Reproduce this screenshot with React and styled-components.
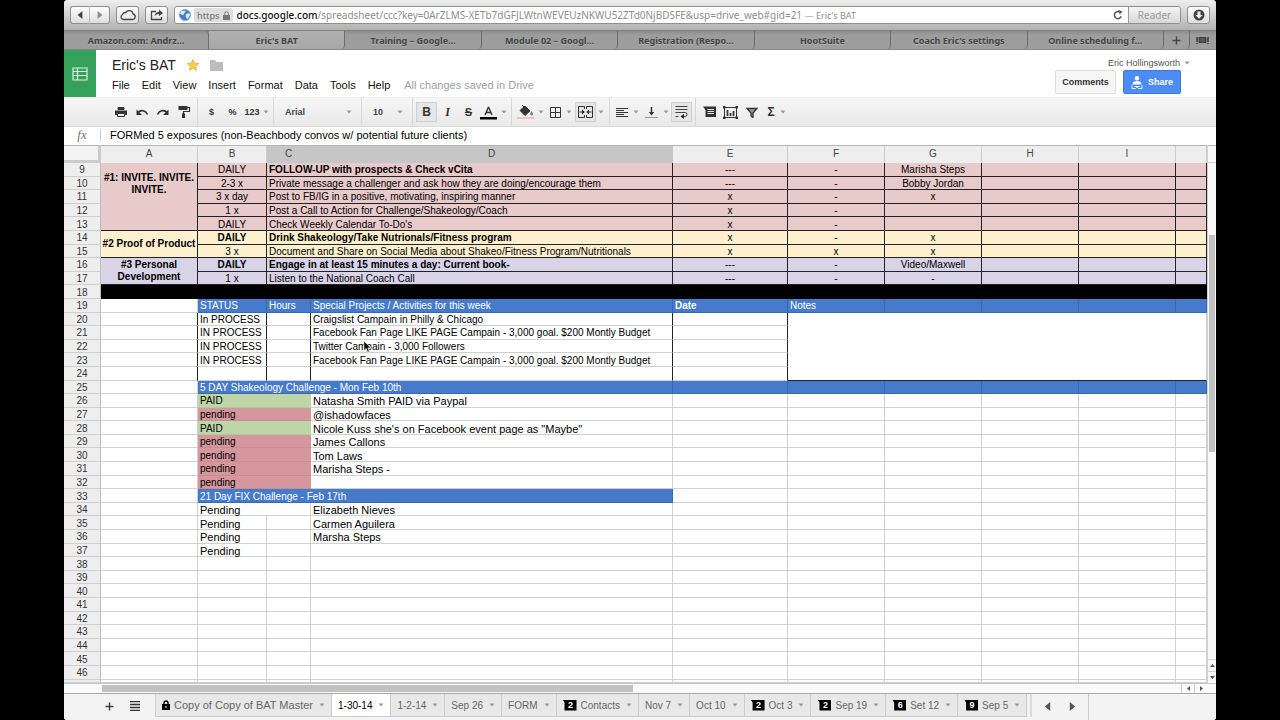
import React from "react";
import styled, { createGlobalStyle, css } from "styled-components";

const GlobalStyle = createGlobalStyle`
  *, *::before, *::after { box-sizing: border-box; }
  html, body { margin: 0; background: #000; }
  body { font-family: "Liberation Sans", Arial, sans-serif; font-size: 11px; color: #222; }
  button, input, select { font: inherit; color: inherit; margin: 0; padding: 0; border: 0; background: none; border-radius: 0; }
  svg { display: block; flex: none; }
`;

/* ---------- window ---------- */

const Backdrop = styled.div`
  height: 100vh;
  padding: 0 5%;
  background: #000;
`;

const Window = styled.div`
  height: 100%;
  display: flex;
  flex-direction: column;
  overflow: hidden;
  background: #fff;
  border-radius: 4px 4px 3px 3px;
`;

const BrowserBar = styled.header`
  flex: none;
  display: flex;
  align-items: center;
  gap: 6px;
  height: 31px;
  padding: 0 6px;
  background: linear-gradient(#efefef, #dcdcdc 30%, #b2b2b2);
  border-bottom: 1px solid #808080;
`;

const ChromeButton = styled.button`
  display: flex;
  align-items: center;
  justify-content: center;
  width: ${(p) => p.$w || 23}px;
  height: 18px;
  background: linear-gradient(#fdfdfd, #dedede);
  border: 1px solid #8f8f8f;
  border-radius: 3px;
`;

const NavPair = styled.div`
  display: flex;
  button:first-child { border-radius: 3px 0 0 3px; border-right-color: #bbb; }
  button:last-child { border-radius: 0 3px 3px 0; border-left: 0; }
`;

const Address = styled.div`
  flex: 1;
  min-width: 0;
  display: flex;
  align-items: center;
  height: 18px;
  overflow: hidden;
  background: #fff;
  border: 1px solid #8f8f8f;
  border-radius: 3px;
  font-family: "Noto Sans", "Open Sans", sans-serif;
  font-size: 10px;
  white-space: nowrap;
  padding-left: 4px;
`;

const Secure = styled.span`
  display: flex;
  align-items: center;
  gap: 3px;
  height: 14px;
  margin: 0 4px 0 3px;
  padding: 0 3px;
  background: #dedede;
  border-radius: 2px;
  font-size: 9px;
  font-weight: 500;
  color: #7a7a7a;
`;

const Url = styled.span`
  flex: 1;
  color: #8e8e8e;
  b { font-weight: 500; color: #111; }
  small { font-size: 9px; }
`;

const Reader = styled.button`
  height: 16px;
  width: 52px;
  margin-left: 5px;
  background: linear-gradient(#f4f4f4, #d8d8d8);
  border-left: 1px solid #9a9a9a;
  font-size: 10px;
  color: #9c9c9c;
`;

const BrowserTabs = styled.nav`
  flex: none;
  display: flex;
  height: 19px;
  background: linear-gradient(#8b8b8b, #9d9d9d 4px, #9d9d9d);
  border-bottom: 1px solid #868686;
  font-family: "Noto Sans", "Open Sans", sans-serif;
`;

const BrowserTab = styled.button`
  flex: ${(p) => (p.$w ? `0 0 ${p.$w}px` : "1 1 0")};
  min-width: 0;
  display: flex;
  align-items: center;
  justify-content: center;
  font-size: 9px;
  font-weight: 700;
  color: #444;
  text-shadow: 0 1px 0 #b4b4b4;
  white-space: nowrap;
  border-right: 1px solid #6c6c6c;
  border-radius: 0 0 4px 0;
  &:first-child { border-radius: 0 4px 0 0; }
  &:last-child { border-right: 0; }
  ${(p) => p.$active && css`background: linear-gradient(#b0b0b0, #a8a8a8);`}
`;

/* ---------- document header ---------- */

const DocHeader = styled.div`
  flex: none;
  display: flex;
  height: 47px;
`;

const Logo = styled.a`
  display: flex;
  align-items: center;
  justify-content: center;
  width: 32px;
  background: #36a15a;
`;

const DocInfo = styled.div`
  flex: 1;
  display: flex;
  flex-direction: column;
  padding: 5px 0 0 16px;
`;

const TitleRow = styled.div`
  display: flex;
  align-items: center;
  gap: 11px;
  height: 20px;
  h1 { margin: 0; font-size: 14px; font-weight: 400; line-height: 20px; color: #222; }
`;

const MenuBar = styled.div`
  display: flex;
  align-items: center;
  gap: 12px;
  height: 20px;
  button { color: #111; }
  span { margin-left: 2px; color: #a0a0a0; }
`;

const Account = styled.div`
  display: flex;
  flex-direction: column;
  align-items: flex-end;
  padding: 7px 26px 0 0;
`;

const UserName = styled.button`
  display: flex;
  align-items: center;
  gap: 4px;
  height: 12px;
  font-size: 9px;
  line-height: 12px;
  color: #555;
`;

const Actions = styled.div`
  display: flex;
  gap: 7px;
  margin: 1px 9px 0 0;
`;

const ActionButton = styled.button`
  display: flex;
  align-items: center;
  justify-content: center;
  gap: 5px;
  width: ${(p) => (p.$primary ? 58 : 61)}px;
  height: 24px;
  border: 1px solid ${(p) => (p.$primary ? "#4078df" : "#dcdcdc")};
  border-radius: 2px;
  background: ${(p) => (p.$primary ? "#4d8cf2" : "#f6f6f6")};
  color: ${(p) => (p.$primary ? "#fff" : "#333")};
  font-size: 9px;
  font-weight: 700;
`;

/* ---------- toolbar ---------- */

const Toolbar = styled.div`
  flex: none;
  display: flex;
  height: 30px;
  padding-left: 43px;
  background: linear-gradient(#f6f6f6, #e9e9e9);
  border-top: 1px solid #ececec;
  border-bottom: 1px solid #dadada;
`;

const Group = styled.div`
  display: flex;
  align-items: center;
  padding: 0 3px;
  border-right: 1px solid ${(p) => (p.$last ? "transparent" : "#d6d6d6")};
`;

const Tool = styled.button`
  display: flex;
  align-items: center;
  justify-content: center;
  gap: ${(p) => p.$gap || 0}px;
  width: ${(p) => p.$w || 21}px;
  height: 20px;
  font-size: ${(p) => (p.$large ? 12 : 9)}px;
  font-weight: 700;
  color: #333;
  border: 1px solid ${(p) => (p.$on ? "#cfcfcf" : "transparent")};
  background: ${(p) => (p.$on ? "#e6e6e6" : "none")};
  i { font-family: "Liberation Serif", serif; }
  s { font-size: 11px; }
`;

const Picker = styled.label`
  display: flex;
  align-items: center;
  width: ${(p) => p.$w}px;
  padding: 0 6px 0 8px;
  select {
    flex: 1;
    min-width: 0;
    appearance: none;
    font-size: 9px;
    font-weight: 700;
    color: #444;
    outline: 0;
  }
`;

const FormulaBar = styled.label`
  flex: none;
  display: flex;
  align-items: center;
  height: 18px;
  padding-bottom: 2px;
  i { width: 36px; text-align: center; font: italic 13px "Liberation Serif", serif; color: #777; }
  input {
    flex: 1;
    height: 12px;
    padding-left: 9px;
    border-left: 1px solid #ccc;
    color: #000;
    outline: 0;
  }
`;

/* ---------- grid ---------- */

const SheetArea = styled.main`
  flex: 1;
  min-height: 0;
  display: flex;
`;

const GridBox = styled.div`
  flex: 1;
  min-width: 0;
  overflow: hidden;
`;

const Grid = styled.table`
  width: 100%;
  height: 100%;
  table-layout: fixed;
  border-collapse: separate;
  border-spacing: 0;
  color: #000;
`;

const ColHead = styled.th`
  height: 18px;
  padding: 0;
  font-size: 10px;
  font-weight: 400;
  line-height: 16px;
  vertical-align: top;
  color: #444;
  background: ${(p) => (p.$selected ? "#c6c6c6" : "#eeeeee")};
  border-top: 1px solid #b5b5b5;
  border-right: 1px solid ${(p) => (p.$selected ? "#c6c6c6" : "#cccccc")};
`;

const Corner = styled(ColHead)`
  background: #f3f3f3;
  border-right: 3px solid #cbcbcb;
  border-bottom: 3px solid #cbcbcb;
`;

const RowHead = styled.th`
  padding: 2px 0 0;
  font-size: 10px;
  font-weight: 400;
  line-height: 10px;
  color: #333;
  background: #eeeeee;
  border-right: 1px solid #bdbdbd;
  border-bottom: 1px solid #cfcfcf;
`;

const Cell = styled.td`
  position: relative;
  padding: ${(p) => (p.$top ? "9px 0 0" : p.$wrap ? "0" : p.$center ? "2px 0 0" : "2px 0 0 2px")};
  font-size: ${(p) => (p.$large ? 11 : 10)}px;
  font-weight: ${(p) => (p.$bold ? 700 : 400)};
  line-height: ${(p) => (p.$wrap ? 12 : 10)}px;
  text-align: ${(p) => (p.$center ? "center" : "left")};
  vertical-align: ${(p) => (p.$top ? "top" : "middle")};
  white-space: ${(p) => (p.$wrap ? "normal" : "nowrap")};
  background: ${(p) => p.$bg || "#fff"};
  color: ${(p) => p.$fg || "#000"};
  border-right: 1px solid ${(p) => p.$right || "#d0d0d0"};
  border-bottom: 1px solid ${(p) => p.$bottom || "#d0d0d0"};
`;

const Pointer = styled.svg`
  position: absolute;
  left: 52px;
  top: 0;
  z-index: 1;
`;

/* ---------- scroll bars ---------- */

const VScroll = styled.div`
  flex: none;
  width: 9px;
  display: flex;
  flex-direction: column;
  background: #f8f8f8;
  border-left: 1px solid #d0d0d0;
`;

const VScrollHead = styled.div`
  height: 18px;
  border-top: 1px solid #b5b5b5;
  border-bottom: 1px solid #d0d0d0;
`;

const HScroll = styled.div`
  flex: none;
  display: flex;
  height: 10px;
  padding: 0 9px 0 37px;
  background: #fafafa;
  border-top: 1px solid #c4c4c4;
`;

const Span = styled.div`
  flex: ${(p) => p.$share} 1 0;
  margin: ${(p) => (p.$thumb ? "1px" : 0)};
  background: ${(p) => (p.$thumb ? "#c1c1c1" : "none")};
`;

const ScrollButton = styled.button`
  display: flex;
  align-items: center;
  justify-content: center;
  min-width: 8px;
  width: ${(p) => (p.$across ? "13px" : "auto")};
  height: ${(p) => (p.$across ? "auto" : "12px")};
  border-left: ${(p) => (p.$across ? "1px solid #d0d0d0" : "0")};
  border-top: ${(p) => (p.$across ? "0" : "1px solid #d0d0d0")};
`;

/* ---------- sheet tabs ---------- */

const SheetBar = styled.footer`
  flex: none;
  display: flex;
  align-items: flex-start;
  height: 27px;
  padding-left: 33px;
  background: #f3f3f3;
  border-top: 1px solid #a8a8a8;
`;

const BarButton = styled.button`
  display: flex;
  align-items: center;
  justify-content: center;
  width: 25px;
  height: 24px;
`;

const SheetTabs = styled.div`
  display: flex;
  margin-left: 8px;
  padding-right: 3px;
  border-left: 1px solid #cfcfcf;
  border-right: 2px solid #dcdcdc;
`;

const SheetTab = styled.button`
  display: flex;
  align-items: center;
  gap: 4px;
  height: 23px;
  padding: 0 6px;
  white-space: nowrap;
  color: ${(p) => (p.$active ? "#000" : "#666")};
  background: ${(p) => (p.$active ? "#fff" : "#e8e8e8")};
  border-right: 1px solid #cccccc;
  border-bottom: 1px solid #cccccc;
  font-size: ${(p) => (p.$large ? 11 : 10)}px;
  svg:last-child { margin-left: 2px; }
`;

const Badge = styled.span`
  width: 14px;
  height: 11px;
  padding-left: 2px;
  background: #000;
  clip-path: polygon(0 0, 100% 0, 100% 100%, 2px 100%, 2px 3px);
  color: #fff;
  font-size: 9px;
  font-weight: 700;
  line-height: 11px;
  text-align: center;
`;

const TabNav = styled.div`
  display: flex;
  height: 26px;
  padding: 0 3px;
  border-right: 1px solid #cccccc;
`;

/* ---------- icons ---------- */

const Caret = ({ color = "#999" }) => (
  <svg width="6" height="4" viewBox="0 0 6 4" aria-hidden="true"><path d="M0.5 0.5h5L3 3.5z" fill={color} /></svg>
);

const Triangle = ({ dir, size = 6, color = "#555" }) => {
  const d = { left: "M8 0v10L2 5z", right: "M2 0v10l6-5z", up: "M0 8h10L5 2z", down: "M0 2h10L5 8z" }[dir];
  return <svg width={size} height={size} viewBox="0 0 10 10" aria-hidden="true"><path d={d} fill={color} /></svg>;
};

const Icon = ({ children, w = 14, h = 14 }) => (
  <svg width={w} height={h} viewBox={`0 0 ${w} ${h}`} fill="none" stroke="#333" strokeWidth="1" aria-hidden="true">{children}</svg>
);

const icons = {
  cloud: (
    <Icon w={18} h={12}><path d="M4.5 10.5h9a2.8 2.8 0 0 0 .6-5.5A4 4 0 0 0 6.7 3.6 2.4 2.4 0 0 0 3.6 5.5A2.6 2.6 0 0 0 4.5 10.5z" stroke="#444" strokeWidth="1.3" /></Icon>
  ),
  share: (
    <Icon><path d="M6 3.5H1.5v8h10V9" stroke="#444" strokeWidth="1.3" /><path d="M4.5 8.5c.3-3 2-4.6 4.5-4.8V1.5l4 3.4-4 3.3V6c-2 0-3.3.7-4.5 2.5z" fill="#444" stroke="none" /></Icon>
  ),
  globe: (
    <Icon w={12} h={12}><circle cx="6" cy="6" r="5.5" fill="#3f7fc4" stroke="#7fa6cf" /><path d="M2 2.5C4 1 5 2 6.5 1.5 7 3 5 4 4.5 5.5S2.5 5.5 1 4.5zM7 5c1.5-1 3-1 4 0 0 2-1.5 4.5-3 5C7 8.5 6 6.5 7 5z" fill="#d7ecf6" stroke="none" /></Icon>
  ),
  lock: (
    <Icon w={7} h={9}><path d="M1.7 4V2.5a1.8 1.8 0 0 1 3.6 0V4" stroke="#777" /><rect x="0" y="4" width="7" height="5" fill="#777" stroke="none" /></Icon>
  ),
  reload: (
    <Icon w={10} h={10}><path d="M8.2 6.2A3.5 3.5 0 1 1 6.8 2.2" stroke="#555" strokeWidth="1.5" /><path d="M5.5 0l4 1.5-2.8 3z" fill="#555" stroke="none" /></Icon>
  ),
  download: (
    <Icon w={12} h={12}><circle cx="6" cy="6" r="5.5" fill="#444" stroke="none" /><path d="M4.5 2.5h3V6h2L6 9.8 2.5 6h2z" fill="#eee" stroke="none" /></Icon>
  ),
  plus: <Icon w={9} h={9}><path d="M4.5 0.5v8M0.5 4.5h8" stroke="#444" strokeWidth="1.5" /></Icon>,
  allTabs: <Icon w={13} h={7}><path d="M3 0.5h7v5H3z" fill="#555" stroke="#3d3d3d" /><path d="M1 0v5M12 0v5M1 6v1M12 6v1" stroke="#3d3d3d" strokeWidth="1.5" /></Icon>,
  sheet: (
    <Icon w={16} h={14}><path d="M1 1h14v12H1zM1 4.5h14M1 8.5h14M5.5 1V13" stroke="#d7f0df" strokeWidth="1.2" /></Icon>
  ),
  star: <Icon w={12} h={12}><path d="M6 0.5l1.6 3.7 4 .4-3 2.6.9 4L6 9.1l-3.5 2.1.9-4-3-2.6 4-.4z" fill="#f7d04a" stroke="#dba92c" strokeWidth=".8" /></Icon>,
  folder: <Icon w={13} h={11}><path d="M0 0h5l1.5 2H13v9H0z" fill="#bdbdbd" stroke="none" /></Icon>,
  person: (
    <Icon w={12} h={13}><circle cx="6" cy="2.2" r="2.2" fill="#fff" stroke="none" /><path d="M1.5 8.5c0-2.5 2-3.5 4.5-3.5s4.5 1 4.5 3.5z" fill="#fff" stroke="none" /><path d="M1 9.5v3h3.5l1-1h1l1 1H11v-3M3.5 10.5h5" stroke="#fff" strokeWidth=".9" /></Icon>
  ),
  print: (
    <Icon><path d="M4 2.5h6v2H4z" fill="#333" /><path d="M1 5.5h12V10h-2V8H3v2H1z" fill="#333" stroke="none" /><path d="M3.5 8.5h7v3h-7z" fill="#eee" /></Icon>
  ),
  undo: <Icon><path d="M3 7.5C5.5 4.5 10.5 5 12.5 9.5" strokeWidth="1.6" /><path d="M1.5 4.5V10H7z" fill="#333" stroke="none" /></Icon>,
  redo: <Icon><path d="M11 7.5C8.5 4.5 3.5 5 1.5 9.5" strokeWidth="1.6" /><path d="M12.5 4.5V10H7z" fill="#333" stroke="none" /></Icon>,
  paint: <Icon><path d="M1.5 1h9v4h-9z" fill="#333" stroke="none" /><path d="M10 2.5h2.5v4h-6V9" strokeWidth="1.2" /><path d="M5 8.5h3V13H5z" fill="#333" stroke="none" /></Icon>,
  textColor: (
    <Icon w={17} h={16}><path d="M5 11L8.3 3.5h.4L12 11M6 8.5h5" strokeWidth="1.4" /><path d="M0 13h17v2.5H0z" fill="#000" stroke="none" /></Icon>
  ),
  fill: (
    <Icon w={17} h={16}><path d="M3 6.5L8 2l5 5-5 4.5z" fill="#333" /><path d="M5 1l4 4" /><path d="M14.5 7c1 1.5 1.5 2.5 1.5 3a1.4 1.4 0 0 1-2.8 0c0-.6.6-1.5 1.3-3z" fill="#777" stroke="none" /><path d="M0 13h17v2H0z" fill="#efc4c7" stroke="none" /></Icon>
  ),
  borders: <Icon w={11} h={11}><path d="M.5.5h10v10H.5zM5.5.5v10M.5 5.5h10" /></Icon>,
  merge: (
    <Icon w={15} h={12}><path d="M6.5 3V.5H.5v11h6V9M8.5 3V.5h6v11h-6V9" /><path d="M1.5 6h3M13.5 6h-3" /><path d="M4 3.5L6.8 6 4 8.5zM11 3.5L8.2 6 11 8.5z" fill="#222" stroke="none" /></Icon>
  ),
  align: <Icon w={12} h={11}><path d="M0 1.5h12M0 3.5h8M0 5.5h12M0 7.5h8M0 9.5h12" /></Icon>,
  valign: <Icon w={13} h={13}><path d="M6.5 1v6" strokeWidth="1.5" /><path d="M3.8 6h5.4L6.5 9.5z" fill="#333" stroke="none" /><path d="M0 11.5h13" stroke="#999" /></Icon>,
  wrap: <Icon w={13} h={14}><path d="M.5 1.5h12M.5 4.5h12M.5 7.5h9.5a2 2 0 0 1 0 4H8M.5 11.5h3" stroke="#444" /><path d="M9 9l-3.5 2.5L9 14z" fill="#222" stroke="none" /></Icon>,
  comment: <Icon w={13} h={12}><path d="M0 0.5h13v10.5H2.5V4z" fill="#333" stroke="none" /><path d="M4.5 3.5h6.5M4.5 5.5h6.5M4.5 7.5h6.5" stroke="#e8e8e8" /></Icon>,
  chart: (
    <Icon w={15} h={13}><path d="M1.5 1.5h12v10h-12z" /><path d="M0 0h2.5v2.5H0zM12.5 0H15v2.5h-2.5zM0 10.5h2.5V13H0zM12.5 10.5H15V13h-2.5z" fill="#333" stroke="none" /><path d="M4.5 4v6M7.5 7v3M10.5 5v5" strokeWidth="1.7" /></Icon>
  ),
  filter: <Icon w={12} h={11}><path d="M1 1.5h10L7 6v4.5L5 9V6z" fill="#999" strokeWidth="1.3" /></Icon>,
  lines: <Icon w={10} h={10}><path d="M0 .5h10M0 3.5h10M0 6.5h10M0 9.5h10" stroke="#333" strokeWidth="1.3" /></Icon>,
  sheetLock: (
    <Icon w={8} h={10}><path d="M2 4.5V3a2 2 0 0 1 4 0v1.5" stroke="#000" strokeWidth="1.4" /><path d="M0 4h8v6H0z" fill="#000" stroke="none" /><path d="M4 6v2" stroke="#fff" /></Icon>
  ),
};

/* ---------- data ---------- */

const PINK = "#e8cacb";
const CREAM = "#fdf0ce";
const LILAC = "#d8d3e7";
const BLUE = "#467acb";
const GREEN = "#bcd6a8";
const ROSE = "#d5979d";
const INK = "#222";
const BLUE_LINE = "#3a66ac";

const columnWidths = [37, 97, 69, 44, 362, 115, 97, 97, 97, 97];

const goals = [
  { n: 9, bg: PINK, section: "#1: INVITE. INVITE. INVITE.", span: 5, freq: "DAILY", task: "FOLLOW-UP with prospects & Check vCita", bold: true, e: "---", f: "-", g: "Marisha Steps" },
  { n: 10, bg: PINK, freq: "2-3 x", task: "Private message a challenger and ask how they are doing/encourage them", e: "---", f: "-", g: "Bobby Jordan" },
  { n: 11, bg: PINK, freq: "3 x day", task: "Post to FB/IG in a positive, motivating, inspiring manner", e: "x", f: "-", g: "x" },
  { n: 12, bg: PINK, freq: "1 x", task: "Post a Call to Action for Challenge/Shakeology/Coach", e: "x", f: "-" },
  { n: 13, bg: PINK, freq: "DAILY", task: "Check Weekly Calendar To-Do's", e: "x", f: "-" },
  { n: 14, bg: CREAM, section: "#2 Proof of Product", span: 2, freq: "DAILY", freqBold: true, task: "Drink Shakeology/Take Nutrionals/Fitness program", bold: true, e: "x", f: "-", g: "x" },
  { n: 15, bg: CREAM, freq: "3 x", task: "Document and Share on Social Media about Shakeo/Fitness Program/Nutritionals", e: "x", f: "x", g: "x" },
  { n: 16, bg: LILAC, section: "#3 Personal Development", span: 2, freq: "DAILY", freqBold: true, task: "Engage in at least 15 minutes a day: Current book-", bold: true, e: "---", f: "-", g: "Video/Maxwell" },
  { n: 17, bg: LILAC, freq: "1 x", task: "Listen to the National Coach Call", e: "---", f: "-", g: "-" },
];

const projects = [
  { n: 20, status: "In PROCESS", text: "Craigslist Campain in Philly & Chicago" },
  { n: 21, status: "IN PROCESS", text: "Facebook Fan Page LIKE PAGE Campain - 3,000 goal. $200 Montly Budget" },
  { n: 22, status: "IN PROCESS", text: "Twitter Campain - 3,000 Followers", pointer: true },
  { n: 23, status: "IN PROCESS", text: "Facebook Fan Page LIKE PAGE Campain - 3,000 goal. $200 Montly Budget" },
  { n: 24, status: "", text: "" },
];

const challenge = [
  { n: 26, status: "PAID", text: "Natasha Smith PAID via Paypal" },
  { n: 27, status: "pending", text: "@ishadowfaces" },
  { n: 28, status: "PAID", text: "Nicole Kuss she's on Facebook event page as \"Maybe\"" },
  { n: 29, status: "pending", text: "James Callons" },
  { n: 30, status: "pending", text: "Tom Laws" },
  { n: 31, status: "pending", text: "Marisha Steps -" },
  { n: 32, status: "pending", text: "" },
];

const fix = [
  { n: 34, text: "Elizabeth Nieves", merged: true },
  { n: 35, text: "Carmen Aguilera" },
  { n: 36, text: "Marsha Steps" },
  { n: 37, text: "" },
];

const emptyRows = [38, 39, 40, 41, 42, 43, 44, 45, 46];

const sheetTabs = [
  { name: "Copy of Copy of BAT Master", lock: true, large: true },
  { name: "1-30-14", active: true },
  { name: "1-2-14" },
  { name: "Sep 26" },
  { name: "FORM" },
  { name: "Contacts", badge: 2 },
  { name: "Nov 7" },
  { name: "Oct 10" },
  { name: "Oct 3", badge: 2 },
  { name: "Sep 19", badge: 2 },
  { name: "Set 12", badge: 6 },
  { name: "Sep 5", badge: 9 },
];

const Blanks = ({ count, ...rest }) => Array.from({ length: count }, (_, i) => <Cell key={i} {...rest} />);

const GoalRow = ({ row }) => {
  const look = { $bg: row.bg, $right: INK, $bottom: INK };
  return (
    <tr>
      <RowHead scope="row">{row.n}</RowHead>
      {row.section && (
        <Cell {...look} rowSpan={row.span} $center $bold $wrap $top={row.span > 2}>{row.section}</Cell>
      )}
      <Cell {...look} $center $bold={row.freqBold}>{row.freq}</Cell>
      <Cell {...look} colSpan={2} $bold={row.bold}>{row.task}</Cell>
      <Cell {...look} $center>{row.e}</Cell>
      <Cell {...look} $center>{row.f}</Cell>
      <Cell {...look} $center>{row.g}</Cell>
      <Blanks count={3} {...look} />
    </tr>
  );
};

function Spreadsheet() {
  const head = { $bg: BLUE, $fg: "#fff", $right: BLUE_LINE, $bottom: BLUE_LINE };
  return (
    <Grid>
      <colgroup>
        {columnWidths.map((w, i) => <col key={i} width={w} />)}
        <col />
      </colgroup>
      <thead>
        <tr>
          <Corner aria-label="Select all" />
          {["A", "B", "C", "D", "E", "F", "G", "H", "I", ""].map((c, i) => (
            <ColHead key={i} scope="col" $selected={c === "C" || c === "D"}>{c}</ColHead>
          ))}
        </tr>
      </thead>
      <tbody>
        {goals.map((row) => <GoalRow key={row.n} row={row} />)}
        <tr>
          <RowHead scope="row">18</RowHead>
          <Cell colSpan={10} $bg="#000" $right="#000" $bottom="#000" />
        </tr>
        <tr>
          <RowHead scope="row">19</RowHead>
          <Cell />
          <Cell {...head}>STATUS</Cell>
          <Cell {...head}>Hours</Cell>
          <Cell {...head}>Special Projects / Activities for this week</Cell>
          <Cell {...head} $bold>Date</Cell>
          <Cell {...head}>Notes</Cell>
          <Blanks count={4} {...head} />
        </tr>
        {projects.map((row, i) => (
          <tr key={row.n}>
            <RowHead scope="row">{row.n}</RowHead>
            <Cell $right={INK} />
            <Cell $right={INK}>{row.status}</Cell>
            <Cell $right={INK} />
            <Cell $right={INK}>
              {row.text}
              {row.pointer && (
                <Pointer width="9" height="13" viewBox="0 0 9 13" aria-hidden="true">
                  <path d="M.8.8v9.8l2.3-2.1 1.6 3.7 1.7-.8L4.9 7.9H8z" fill="#111" stroke="#fff" strokeWidth=".7" />
                </Pointer>
              )}
            </Cell>
            <Cell $right={INK} />
            {i === 0 && <Cell rowSpan={5} colSpan={5} $bottom={INK} />}
          </tr>
        ))}
        <tr>
          <RowHead scope="row">25</RowHead>
          <Cell />
          <Cell {...head} colSpan={3}>5 DAY Shakeology Challenge - Mon Feb 10th</Cell>
          <Blanks count={6} {...head} />
        </tr>
        {challenge.map((row) => {
          const paid = row.status === "PAID";
          return (
            <tr key={row.n}>
              <RowHead scope="row">{row.n}</RowHead>
              <Cell />
              <Cell
                colSpan={2}
                $bg={paid ? GREEN : ROSE}
                $right={paid ? GREEN : ROSE}
                $bottom={paid ? "#b2c99f" : "#c98c92"}
              >
                {row.status}
              </Cell>
              <Cell $large>{row.text}</Cell>
              <Blanks count={6} />
            </tr>
          );
        })}
        <tr>
          <RowHead scope="row">33</RowHead>
          <Cell />
          <Cell {...head} colSpan={3}>21 Day FIX Challenge - Feb 17th</Cell>
          <Blanks count={6} />
        </tr>
        {fix.map((row) => (
          <tr key={row.n}>
            <RowHead scope="row">{row.n}</RowHead>
            <Cell />
            <Cell $large colSpan={row.merged ? 2 : 1}>Pending</Cell>
            {!row.merged && <Cell />}
            <Cell $large>{row.text}</Cell>
            <Blanks count={6} />
          </tr>
        ))}
        {emptyRows.map((n) => (
          <tr key={n}>
            <RowHead scope="row">{n}</RowHead>
            <Blanks count={10} />
          </tr>
        ))}
        <tr>
          <RowHead height="3" />
          <Blanks count={10} />
        </tr>
      </tbody>
    </Grid>
  );
}

export default function App() {
  return (
    <Backdrop>
      <GlobalStyle />
      <Window>
        <BrowserBar>
          <NavPair>
            <ChromeButton $w={20} aria-label="Back"><Triangle dir="left" size={8} color="#444" /></ChromeButton>
            <ChromeButton $w={20} aria-label="Forward"><Triangle dir="right" size={8} color="#8a8a8a" /></ChromeButton>
          </NavPair>
          <ChromeButton aria-label="iCloud tabs">{icons.cloud}</ChromeButton>
          <ChromeButton aria-label="Share page">{icons.share}</ChromeButton>
          <Address>
            {icons.globe}
            <Secure>https {icons.lock}</Secure>
            <Url>
              <b>docs.google.com</b>/spreadsheet/ccc?key=0ArZLMS-XETb7dGFJLWtnWEVEUzNKWU52ZTd0NjBDSFE&amp;usp=drive_web#gid=21 <small>— Eric's BAT</small>
            </Url>
            {icons.reload}
            <Reader>Reader</Reader>
          </Address>
          <ChromeButton aria-label="Downloads">{icons.download}</ChromeButton>
        </BrowserBar>
        <BrowserTabs>
          <BrowserTab $w={145}>Amazon.com: Andrz…</BrowserTab>
          <BrowserTab $active>Eric's BAT</BrowserTab>
          <BrowserTab>Training – Google…</BrowserTab>
          <BrowserTab>Module 02 – Googl…</BrowserTab>
          <BrowserTab>Registration (Respo…</BrowserTab>
          <BrowserTab>HootSuite</BrowserTab>
          <BrowserTab>Coach Eric's settings</BrowserTab>
          <BrowserTab>Online scheduling f…</BrowserTab>
          <BrowserTab $w={26} aria-label="New tab">{icons.plus}</BrowserTab>
          <BrowserTab $w={26} aria-label="Show all tabs">{icons.allTabs}</BrowserTab>
        </BrowserTabs>

        <DocHeader>
          <Logo href="#" aria-label="Sheets home">{icons.sheet}</Logo>
          <DocInfo>
            <TitleRow>
              <h1>Eric's BAT</h1>
              {icons.star}
              {icons.folder}
            </TitleRow>
            <MenuBar>
              {["File", "Edit", "View", "Insert", "Format", "Data", "Tools", "Help"].map((m) => <button key={m}>{m}</button>)}
              <span>All changes saved in Drive</span>
            </MenuBar>
          </DocInfo>
          <Account>
            <UserName>Eric Hollingsworth <Caret /></UserName>
            <Actions>
              <ActionButton>Comments</ActionButton>
              <ActionButton $primary>{icons.person}Share</ActionButton>
            </Actions>
          </Account>
        </DocHeader>

        <Toolbar>
          <Group>
            <Tool aria-label="Print">{icons.print}</Tool>
            <Tool aria-label="Undo">{icons.undo}</Tool>
            <Tool aria-label="Redo">{icons.redo}</Tool>
            <Tool aria-label="Paint format">{icons.paint}</Tool>
          </Group>
          <Group>
            <Tool>$</Tool>
            <Tool>%</Tool>
            <Tool $w={27} $gap={3}>123 <Caret /></Tool>
          </Group>
          <Group>
            <Picker $w={81}>
              <select aria-label="Font"><option>Arial</option></select>
              <Caret />
            </Picker>
          </Group>
          <Group>
            <Picker $w={44}>
              <select aria-label="Font size"><option>10</option></select>
              <Caret />
            </Picker>
          </Group>
          <Group>
            <Tool $on $large aria-label="Bold">B</Tool>
            <Tool $large aria-label="Italic"><i>I</i></Tool>
            <Tool aria-label="Strikethrough"><s>S</s></Tool>
            <Tool $w={29} $gap={4} aria-label="Text color">{icons.textColor}<Caret /></Tool>
          </Group>
          <Group>
            <Tool $w={31} $gap={4} aria-label="Fill color">{icons.fill}<Caret /></Tool>
            <Tool $w={29} $gap={5} aria-label="Borders">{icons.borders}<Caret /></Tool>
            <Tool $on aria-label="Merge cells">{icons.merge}</Tool>
            <Tool $w={10} aria-label="Merge options"><Caret /></Tool>
          </Group>
          <Group>
            <Tool $w={29} $gap={5} aria-label="Horizontal align">{icons.align}<Caret /></Tool>
            <Tool $w={29} $gap={5} aria-label="Vertical align">{icons.valign}<Caret /></Tool>
            <Tool $on aria-label="Wrap text">{icons.wrap}</Tool>
          </Group>
          <Group $last>
            <Tool aria-label="Insert comment">{icons.comment}</Tool>
            <Tool aria-label="Insert chart">{icons.chart}</Tool>
            <Tool aria-label="Filter">{icons.filter}</Tool>
            <Tool $large $w={29} $gap={5} aria-label="Functions">Σ <Caret /></Tool>
          </Group>
        </Toolbar>

        <FormulaBar>
          <i>fx</i>
          <input aria-label="Formula" defaultValue="FORMed 5 exposures (non-Beachbody convos w/ potential future clients)" />
        </FormulaBar>

        <SheetArea>
          <GridBox><Spreadsheet /></GridBox>
          <VScroll>
            <VScrollHead />
            <Span $share={71} />
            <Span $share={218} $thumb />
            <Span $share={207} />
            <ScrollButton aria-label="Scroll up"><Triangle dir="up" size={5} /></ScrollButton>
            <ScrollButton aria-label="Scroll down"><Triangle dir="down" size={5} /></ScrollButton>
          </VScroll>
        </SheetArea>
        <HScroll>
          <Span $share={531} $thumb />
          <Span $share={548} />
          <ScrollButton $across aria-label="Scroll left"><Triangle dir="left" size={5} /></ScrollButton>
          <ScrollButton $across aria-label="Scroll right"><Triangle dir="right" size={5} /></ScrollButton>
        </HScroll>

        <SheetBar>
          <BarButton aria-label="Add sheet">{icons.plus}</BarButton>
          <BarButton aria-label="All sheets">{icons.lines}</BarButton>
          <SheetTabs>
            {sheetTabs.map((t) => (
              <SheetTab key={t.name} $active={t.active} $large={t.large}>
                {t.lock && icons.sheetLock}
                {t.badge && <Badge>{t.badge}</Badge>}
                {t.name}
                <Caret />
              </SheetTab>
            ))}
          </SheetTabs>
          <TabNav>
            <BarButton aria-label="Previous sheets"><Triangle dir="left" size={9} /></BarButton>
            <BarButton aria-label="Next sheets"><Triangle dir="right" size={9} /></BarButton>
          </TabNav>
        </SheetBar>
      </Window>
    </Backdrop>
  );
}
